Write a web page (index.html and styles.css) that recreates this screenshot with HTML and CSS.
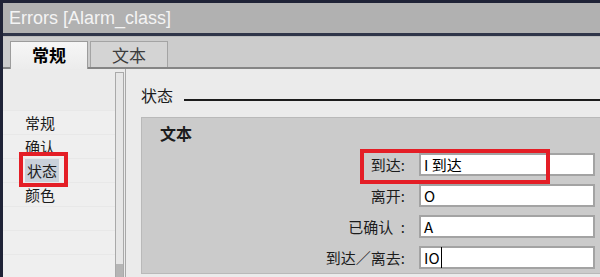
FILE: index.html
```html
<!DOCTYPE html>
<html lang="zh">
<head>
  <meta charset="UTF-8" />
  <title>Errors [Alarm_class]</title>
  <link rel="stylesheet" href="styles.css">
</head>
<body>
  <div class="window">
    <div class="titlebar">Errors [Alarm_class]</div>

    <div class="tabbar">
      <div class="tab active">常规</div>
      <div class="tab">文本</div>
    </div>

    <div class="content">
      <!-- left navigation -->
      <div class="nav">
        <div class="nav-head"></div>
        <div class="nav-item">常规</div>
        <div class="nav-item">确认</div>
        <div class="nav-item"><span class="selected">状态</span></div>
        <div class="nav-item">颜色</div>
        <div class="nav-item"></div>
        <div class="nav-item"></div>
        <div class="nav-item"></div>
        <div class="mark mark-nav"></div>
      </div>

      <div class="scrollbar">
        <div class="track"></div>
        <div class="thumb"></div>
      </div>

      <!-- properties -->
      <div class="main">
        <div class="section-title">
          <span>状态</span>
          <span class="rule"></span>
        </div>

        <div class="group">
          <div class="group-title">文本</div>
          <div class="form">
            <label>到达:</label>
            <div class="field">I 到达</div>
            <label>离开:</label>
            <div class="field">O</div>
            <label>已确认&ensp;:</label>
            <div class="field">A</div>
            <label>到达／离去:</label>
            <div class="field"><span class="caret">IO</span></div>
          </div>
          <div class="mark mark-form"></div>
        </div>
      </div>
    </div>
  </div>
</body>
</html>
```

FILE: styles.css
```css
html, body {
  margin: 0;
  padding: 0;
  overflow: hidden;
}
body {
  font-family: "Noto Sans CJK SC", "Liberation Sans", sans-serif;
  color: #1c1c1c;
  background: #ebebeb;
}
.window {
  width: 600px;
  height: 277px;
  box-sizing: border-box;
  border-top: 3px solid #1f2337;
  border-left: 3px solid #1f2337;
  display: flex;
  flex-direction: column;
}
.titlebar {
  height: 30px;
  line-height: 30px;
  padding-left: 6px;
  background: #b1b1b1;
  color: #f4f4f4;
  font-family: "Liberation Sans", sans-serif;
  font-size: 18px;
  border-bottom: 3px solid #2f3549;
}
.tabbar {
  height: 30px;
  flex: 0 0 auto;
  display: flex;
  align-items: flex-end;
  gap: 2px;
  padding-left: 7px;
  background: #cccccc;
  border-top: 1px solid #bcbcbc;
  border-bottom: 2px solid #858585;
}
.tab {
  width: 76px;
  height: 25px;
  border: 1px solid #a4a4a4;
  border-bottom: none;
  background: #d4d4d4;
  color: #3c3c3c;
  font-size: 17px;
  line-height: 25px;
  text-align: center;
}
.tab.active {
  height: 27px;
  margin-bottom: -2px;
  border-color: #9c9c9c;
  background: linear-gradient(#f6f6f6, #ececec);
  color: #000;
  font-weight: bold;
}
.content {
  flex: 1;
  display: flex;
  min-height: 0;
}
.nav {
  position: relative;
  width: 112px;
  background: #efefef;
  font-size: 15px;
}
.nav-head {
  height: 41px;
  background: #ebebeb;
}
.nav-item {
  height: 23px;
  line-height: 23px;
  border-top: 1px solid #e8e8e8;
  padding-left: 22px;
}
.selected {
  display: inline-block;
  padding: 0 2px;
  background: #c9d1da;
}
.mark {
  position: absolute;
  box-sizing: border-box;
  border: 4px solid #e41e26;
}
.mark-nav {
  left: 16px;
  top: 83px;
  width: 49px;
  height: 35px;
}
.scrollbar {
  width: 7px;
  margin-top: 3px;
  margin-right: 1px;
  border: 1px solid #a9a9a9;
  border-bottom: none;
  background: #e6e6e6;
  display: flex;
  flex-direction: column;
}
.track {
  flex: 1;
}
.thumb {
  height: 13px;
  background: #b5b5b5;
}
.main {
  flex: 1;
  overflow: hidden;
  border-left: 1px solid #a8a8a8;
  padding-left: 15px;
  background: #ebebeb;
}
.section-title {
  display: flex;
  align-items: center;
  height: 20px;
  margin-top: 16px;
  font-size: 16px;
}
.rule {
  flex: 1;
  align-self: flex-end;
  height: 2px;
  margin: 0 0 4px 11px;
  background: #1c1c1c;
}
.group {
  position: relative;
  margin-top: 12px;
  margin-right: -10px;
  height: 157px;
  box-sizing: border-box;
  border: 1px solid #b9b9b9;
  background: #cbcbcb;
}
.group-title {
  padding: 6px 0 0 18px;
  line-height: 18px;
  font-size: 16px;
  font-weight: bold;
}
.form {
  display: grid;
  grid-template-columns: 264px 176px;
  grid-auto-rows: 23px;
  column-gap: 13px;
  row-gap: 8px;
  margin-top: 11px;
  font-size: 15px;
}
.form label {
  text-align: right;
  line-height: 23px;
  padding-right: 1px;
}
.field {
  box-sizing: border-box;
  border: 2px solid #a3a3a3;
  background: #fff;
  padding-left: 3px;
  line-height: 19px;
  color: #000;
}
.caret {
  border-right: 1px solid #000;
  padding-right: 1px;
}
.mark-form {
  left: 218px;
  top: 31px;
  width: 190px;
  height: 35px;
}
```
